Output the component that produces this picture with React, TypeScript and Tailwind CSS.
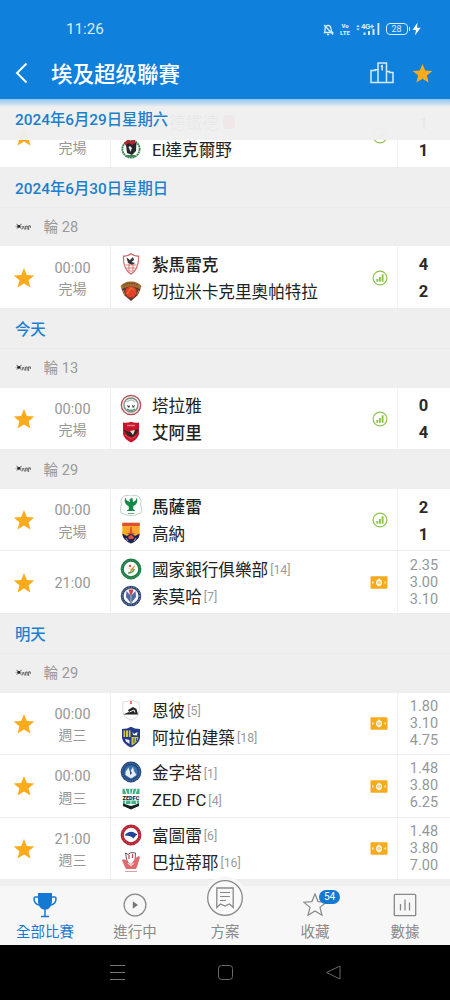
import React from 'react';

interface Team {
  name: string;
  crest: string;
  rank?: number;
  bold?: boolean;
  redCard?: boolean;
}

interface Match {
  time?: string;
  status?: string;
  home: Team;
  away: Team;
  scores?: string[];
  odds?: string[];
}

interface Round {
  label: string;
  matches: Match[];
}

interface Day {
  title: string;
  rounds: Round[];
}

const STAR = 'M12 1 L15.1 8.6 L23.2 9.200 L17 14.4 L19 22.300 L12 18 L5 22.300 L7 14.4 L.8 9.200 L8.9 8.6 Z';

const previousMatch: Match = {
  time: '\u00a0',
  status: '完場',
  home: { name: '德鐵德', crest: 'none', redCard: true },
  away: { name: 'El達克爾野', crest: 'dakhleya' },
  scores: ['1', '1'],
};

const days: Day[] = [
  {
    title: '2024年6月30日星期日',
    rounds: [
      {
        label: '輪 28',
        matches: [
          {
            time: '00:00',
            status: '完場',
            home: { name: '紮馬雷克', crest: 'zamalek', bold: true },
            away: { name: '切拉米卡克里奧帕特拉', crest: 'ceramica' },
            scores: ['4', '2'],
          },
        ],
      },
    ],
  },
  {
    title: '今天',
    rounds: [
      {
        label: '輪 13',
        matches: [
          {
            time: '00:00',
            status: '完場',
            home: { name: '塔拉雅', crest: 'talaea' },
            away: { name: '艾阿里', crest: 'ahly', bold: true },
            scores: ['0', '4'],
          },
        ],
      },
      {
        label: '輪 29',
        matches: [
          {
            time: '00:00',
            status: '完場',
            home: { name: '馬薩雷', crest: 'masry', bold: true },
            away: { name: '高納', crest: 'gouna' },
            scores: ['2', '1'],
          },
          {
            time: '21:00',
            home: { name: '國家銀行俱樂部', crest: 'bank', rank: 14 },
            away: { name: '索莫哈', crest: 'smouha', rank: 7 },
            odds: ['2.35', '3.00', '3.10'],
          },
        ],
      },
    ],
  },
  {
    title: '明天',
    rounds: [
      {
        label: '輪 29',
        matches: [
          {
            time: '00:00',
            status: '週三',
            home: { name: '恩彼', crest: 'enppi', rank: 5 },
            away: { name: '阿拉伯建築', crest: 'mokawloon', rank: 18 },
            odds: ['1.80', '3.10', '4.75'],
          },
          {
            time: '00:00',
            status: '週三',
            home: { name: '金字塔', crest: 'pyramids', rank: 1 },
            away: { name: 'ZED FC', crest: 'zed', rank: 4 },
            odds: ['1.48', '3.80', '6.25'],
          },
          {
            time: '21:00',
            status: '週三',
            home: { name: '富圖雷', crest: 'future', rank: 6 },
            away: { name: '巴拉蒂耶', crest: 'baladiyat', rank: 16 },
            odds: ['1.48', '3.80', '7.00'],
          },
        ],
      },
    ],
  },
];

const crests: Record<string, React.ReactNode> = {
  dakhleya: (
    <>
      <circle cx="11" cy="11" r="8.6" fill="#fff" stroke="#3f8a55" strokeWidth="1.9" strokeDasharray="2 .5" />
      <path d="M4 5 L8 1.500 L11 3 L15 1.500 L16 8 H6 Z" fill="#b3262b" />
      <path d="M6 7 L9 5 L12 7 L16.500 4 L16 13 L12 17 L7 15Z" fill="#24262a" />
      <path d="M8.500 9 L10 8 L12 10 L10.500 14Z" fill="#e6e6e6" />
      <path d="M7 18 H15" stroke="#3f8a55" strokeWidth="2" />
    </>
  ),
  zamalek: (
    <>
      <path d="M11 .8 C13 2.6 16 3.2 18.6 3 C18.8 10 17.5 17 11 21.2 C4.500 17 3.200 10 3.400 3 C6 3.200 9 2.600 11 .8Z" fill="#fff" stroke="#cf6c6c" strokeWidth="1.2" />
      <path d="M6.500 4.500 L10 7 L13 4 L14 7 L11.500 9 L15 10 L12 12 L8 10 Z" fill="#33343a" />
      <path d="M5.500 12 H16.500 M6.500 15 H15.500 M8.500 18 H13.500" stroke="#d98080" strokeWidth="1" />
      <path d="M9 11 V18 M13 11 V18" stroke="#cf5a5a" strokeWidth=".8" />
    </>
  ),
  ceramica: (
    <>
      <path d="M2.500 5 Q11 -1 19.500 5 L20.500 9 L18 15 L11 21 L4 15 L1.500 9Z" fill="#67382a" />
      <path d="M.5 6 Q5 1 11 1.500 Q17 1 21.500 6 L20 9 Q11 4 2 9Z" fill="#a06a32" />
      <path d="M4 5 Q11 1.500 18 5" fill="none" stroke="#5d3a26" strokeWidth="1" strokeDasharray="1.500 1" />
      <circle cx="11" cy="12" r="5.6" fill="#e3412a" />
      <path d="M7 14 L11 8 L14 10" fill="none" stroke="#f06a31" strokeWidth="1.300" />
      <path d="M3 10 L5 15 M19 10 L17 15" stroke="#b08a35" strokeWidth="1" />
    </>
  ),
  talaea: (
    <>
      <circle cx="11" cy="11" r="9.700" fill="#f6eaea" stroke="#b34b53" strokeWidth="1.300" />
      <circle cx="11" cy="11" r="7" fill="#fff" stroke="#7a8b82" strokeWidth="1.300" />
      <path d="M7 8 Q11 4 15 8" fill="none" stroke="#b9c4be" strokeWidth="1.200" />
      <path d="M7 11 L9 12 L10 11 L9.500 13.500 H8Z M12 11 L13.500 12 L15 11 L14 13.500 H12.500Z" fill="#30353a" />
      <path d="M7 15 Q11 18 15 15" fill="none" stroke="#4e8b63" strokeWidth="1.300" />
    </>
  ),
  ahly: (
    <>
      <path d="M3 1.500 Q7 2.500 11 .8 Q15 2.500 19 1.500 V13 Q18 18 11 21.500 Q4 18 3 13Z" fill="#c8152a" />
      <path d="M7 4.500 H15" stroke="#e8767c" strokeWidth="1.600" />
      <path d="M3.500 8.500 L9 11 L18.500 8 L17 12 L13 16 L8 15 Z" fill="#342426" />
      <path d="M10 10 L15 9 L13 14 Z" fill="#e9dfcf" />
      <path d="M5 14 L11 18 L16 15" fill="none" stroke="#e04a55" strokeWidth="1" />
    </>
  ),
  masry: (
    <>
      <path d="M4 1 Q11 -1 18 1 Q22.500 5 20.500 9 Q22.500 14 21 18 Q14 21 11 20.500 Q8 21 1 18 Q-.5 14 1.500 9 Q-.5 5 4 1Z" fill="#fff" stroke="#b5cfbd" strokeWidth=".9" />
      <path d="M5.500 2.500 Q3 8 8.500 11 L9 14 L6.500 16 H15.500 L13 14 L13.500 11 Q19 8 16.500 2.500 Q16.500 6 13 7 L12.500 3 L9.500 4 L10 7 Q6 6 5.500 2.500Z" fill="#138a46" />
      <path d="M8 18.500 H14" stroke="#6fae85" strokeWidth="1" />
    </>
  ),
  gouna: (
    <>
      <path d="M2.300 .8 H19.700 V13 Q18 18 11 21.500 Q4 18 2.300 13Z" fill="#f8a928" />
      <path d="M2.300 .8 H19.700 V4 H2.300Z" fill="#de4e34" />
      <path d="M2.300 11.500 L7 14 L11 11 L15 14 L19.700 11.500 Q19.500 18 11 21.500 Q2.500 18 2.300 11.500Z" fill="#1e2356" />
      <path d="M11 5 L12 11 H10Z M7.500 11.500 H14.500" fill="#de4e34" stroke="#de4e34" strokeWidth="1" />
      <path d="M8 15 L11 12.500 L14 15 L13 17 H9Z" fill="#e0503c" />
      <path d="M6 16 L8 19 M16 16 L14 19" stroke="#e9c9bd" strokeWidth=".8" />
    </>
  ),
  bank: (
    <>
      <circle cx="11" cy="11" r="8.800" fill="#fff" stroke="#1d7b44" strokeWidth="3.200" />
      <circle cx="11" cy="11" r="8.800" fill="none" stroke="#6db088" strokeWidth=".8" strokeDasharray="1 1.500" />
      <path d="M6 9 L11 11 L15.500 6.500 L13 12 L9 15 L11 11.500Z" fill="#d88b2b" />
      <path d="M8 15 Q13 15 14.500 11" fill="none" stroke="#4e9d5c" strokeWidth="1.300" />
      <circle cx="10" cy="8" r="1.200" fill="#d9533b" />
    </>
  ),
  smouha: (
    <>
      <circle cx="11" cy="11" r="8.900" fill="#f7f7fb" stroke="#2c4371" strokeWidth="2.800" />
      <circle cx="11" cy="11" r="8.900" fill="none" stroke="#9fb0cd" strokeWidth=".9" strokeDasharray="1 1.600" />
      <path d="M6.500 6 L10 10 V17 L6 12Z M15.500 6 L12 10 V17 L16 12Z" fill="#4a69a5" />
      <path d="M11 8 V18" stroke="#35466e" strokeWidth="1.200" />
      <path d="M8.500 4.500 H13.500 L12 9.500 H10Z" fill="#d33e4d" />
    </>
  ),
  enppi: (
    <>
      <path d="M3 3 Q7 3 11 .8 Q15 3 19 3 Q20 9 18.500 16 Q15 20 11 21 Q7 20 3.500 16 Q2 9 3 3Z" fill="#fff" stroke="#d8d0d0" strokeWidth=".8" />
      <path d="M3 15.500 L9 13 L8 11 L13 8 L16.500 10 L18 15.500 Z" fill="#202124" />
      <path d="M9.500 13 L14 11 L15 13.500" fill="none" stroke="#fff" strokeWidth="1" />
      <path d="M11 2 V5" stroke="#d92b36" strokeWidth="1.300" />
    </>
  ),
  mokawloon: (
    <>
      <path d="M2 3 L7 2.500 L11 .8 L15 2.500 L20 3 V12 Q19 18 11 21.500 Q3 18 2 12Z" fill="#263a8c" />
      <path d="M3.500 4.500 H10.500 V11 H3.500Z" fill="#d5c93f" />
      <path d="M5.500 4 V11 M8.500 4 V11" stroke="#4d5560" strokeWidth="1" />
      <path d="M11.500 11 H18.500 Q17.500 17 11.500 19.500Z" fill="#cdc93e" />
      <path d="M12.500 6 L14 8 L17.500 6 L17 9.500 L13 9Z" fill="#fff" />
      <path d="M5 13 L9.500 14 V18 L6 15.500Z" fill="#e9ecf7" />
      <path d="M14 12 V17 M16.500 12 V15" stroke="#3f4f6f" strokeWidth="1" />
    </>
  ),
  pyramids: (
    <>
      <circle cx="11" cy="11" r="10.400" fill="#244a7e" />
      <circle cx="11" cy="11" r="8.700" fill="none" stroke="#7590b5" strokeWidth=".9" strokeDasharray="1 1.300" />
      <circle cx="11" cy="11" r="6.800" fill="#3b73ad" />
      <path d="M5.500 14 V11 L8.500 6.500 L9.500 10 H10.500 L13 6 L14 10 L16.500 14 L11 17.500Z" fill="#e6edf5" />
      <path d="M10 9 V14 L12 12Z" fill="#244a7e" />
    </>
  ),
  zed: (
    <>
      <path d="M2.500 .8 H19.500 V6 H2.500Z" fill="#3fae83" />
      <path d="M5 1 L7 6 M9.500 1 L10 6 M13 1 L12 6 M17 1 L15 6" stroke="#e8f5ef" strokeWidth="1.200" />
      <text x="2.500" y="11.500" textLength="17" lengthAdjust="spacingAndGlyphs" fontSize="6.200" fontWeight="900" fontFamily="Roboto, sans-serif" fill="#162a2a">ZEDFC</text>
      <path d="M3 12.500 H19 V16 H3Z" fill="#3fae83" />
      <path d="M6 12.500 L5 16 M11 12.500 V16 M16 12.500 L17 16" stroke="#e8f5ef" strokeWidth="1.100" />
      <path d="M3 15.500 L11 18 L19 15.500 V18 L11 21.500 L3 18Z" fill="#14211f" />
    </>
  ),
  future: (
    <>
      <circle cx="11" cy="11" r="8.800" fill="#fff" stroke="#b5202f" strokeWidth="3.200" />
      <circle cx="11" cy="11" r="8.800" fill="none" stroke="#d4727c" strokeWidth=".9" strokeDasharray="1.200 1.800" />
      <path d="M4.500 11.500 Q8 7 13 8 L17.500 10.500 L15.500 12 L13.500 14.500 Q11 11.500 4.500 11.500Z" fill="#23449a" />
    </>
  ),
  baladiyat: (
    <>
      <path d="M5.500 2 L8 3.500 L11 1.500 L15.500 2 L15 10 L11 14 L7 10Z" fill="#fff" stroke="#5a4a4a" strokeWidth=".9" />
      <path d="M9 4 V8 M12.500 3 V7" stroke="#cf3f4a" strokeWidth="1.200" />
      <path d="M2 9 Q4 7 7 10 L11 13 L15 8 Q18 4 20 6 L18 13 L16 18 H6 L4 14Z" fill="#e06a70" />
      <path d="M8 12 L11 14.500 L14 12" fill="none" stroke="#fbe3e3" strokeWidth="1.100" />
      <path d="M5 20.500 H17" stroke="#d9a3a5" strokeWidth="1" />
    </>
  ),
};

function Crest({ name }: { name: string }) {
  if (!crests[name]) return <span className="w-[39px] shrink-0" />;
  return (
    <svg viewBox="0 0 22 22" className="w-[22px] h-[22px] shrink-0">
      {crests[name]}
    </svg>
  );
}

function Star({ className }: { className: string }) {
  return (
    <svg viewBox="0 0 24 24" className={className}>
      <path d={STAR} fill="#fcab1c" />
    </svg>
  );
}

function StatsIcon() {
  return (
    <svg viewBox="0 0 16 16" className="w-4 h-4">
      <circle cx="8" cy="8" r="6.900" fill="none" stroke="#8bc34a" strokeWidth="1.200" />
      <path d="M5.300 9 V11.800 M7.900 7 V11.800 M10.600 4.200 V11.800" stroke="#8bc34a" strokeWidth="1.900" />
    </svg>
  );
}

// Odds badge, a small pitch with the centre circle
function PitchIcon() {
  return (
    <svg viewBox="0 0 18 13" className="w-[18px] h-[13px]">
      <rect x=".5" y=".3" width="17" height="12.400" rx="1" fill="#f6ab1a" />
      <ellipse cx="9" cy="6.500" rx="2.300" ry="2.700" fill="none" stroke="#fff" strokeWidth="1.300" />
      <path d="M9 2.500 V10.500" stroke="#fff" strokeWidth="1" />
      <path d="M2.800 5.500 V7.500 M15.200 5.500 V7.500" stroke="#fff" strokeWidth="1.200" />
    </svg>
  );
}

function TeamLine({ team }: { team: Team }) {
  return (
    <div className="h-[27px] flex items-center whitespace-nowrap">
      <Crest name={team.crest} />
      <span className={`ml-[10px] pt-1 text-[16.6px] leading-6 text-[#222] ${team.bold ? 'font-medium' : ''}`}>
        {team.name}
      </span>
      {team.rank && <span className="ml-[2px] pt-[3px] text-[12.3px] text-[#9a9a9a]">[{team.rank}]</span>}
      {team.redCard && <span className="ml-1 w-3 h-3.5 rounded-sm bg-red-600" />}
    </div>
  );
}

function MatchRow({ match }: { match: Match }) {
  return (
    <div className="h-[62.5px] shrink-0 flex bg-white border-b border-[#ededed]">
      <div className="w-[111px] flex items-center border-r border-[#efefef]">
        <Star className="w-[22px] h-[22px] ml-[13px] mt-px shrink-0" />
        <div className="ml-[10px] w-[55px] pt-1 text-center text-[14.5px] leading-[20.5px] text-[#979797]">
          <div>{match.time}</div>
          {match.status && <div className="text-[14px]">{match.status}</div>}
        </div>
      </div>
      <div className="flex-1 flex flex-col justify-center pl-[9px]">
        <TeamLine team={match.home} />
        <TeamLine team={match.away} />
      </div>
      <div className="w-[36px] pt-px flex items-center justify-center">
        {match.odds ? <PitchIcon /> : <div className="ml-[2px]"><StatsIcon /></div>}
      </div>
      <div className="w-[53px] flex flex-col items-center justify-center border-l border-[#f2f2f2]">
        {match.scores?.map((score, i) => (
          <div key={i} className="h-[27px] pt-px pr-px leading-[27px] text-[16.5px] font-bold text-[#2a2a2a]">{score}</div>
        ))}
        {match.odds?.map((odd, i) => (
          <div key={i} className="text-[14.5px] leading-[17px] text-[#979797]">{odd}</div>
        ))}
      </div>
    </div>
  );
}

function RoundHeader({ label }: { label: string }) {
  return (
    <div className="h-[38.8px] shrink-0 flex items-center pl-[14px] bg-[#efefef]">
      <svg viewBox="0 0 18 10" className="w-[18px] h-[10px]">
        <path d="M1 4.500 H17" stroke="#bdbdbd" strokeWidth=".8" />
        <path d="M2.500 2 L5 4.500 L7.500 2 M2.500 6.500 L5 4.500 L7.500 6.500" fill="none" stroke="#8a8a8a" strokeWidth="1.100" />
        <circle cx="4.800" cy="4.300" r="1.400" fill="#222" />
        <path d="M8 7.500 L9.300 4 L10.600 7.500 M11.600 7.500 V4 H13.200 V7.500 M14.600 8 V3.800 H16.300 V6" fill="none" stroke="#6f6f6f" strokeWidth="1" />
      </svg>
      <span className="ml-[11.5px] pt-[2px] text-[14.6px] text-[#9a9a9a]">{label}</span>
    </div>
  );
}

function DayHeader({ title }: { title: string }) {
  return (
    <div className="h-10 shrink-0 flex items-center pl-[15px] pt-[5px] bg-[#efefef] border-b border-[#eaeaea] text-[15.35px] font-medium text-[#1b7fcd]">
      {title}
    </div>
  );
}

function StatusBar() {
  return (
    <div className="h-[58px] flex items-center justify-between pl-[66px] pr-[29px] text-[#d8ecff]">
      <span className="text-[15.2px]">11:26</span>
      <div className="flex items-center">
        <svg viewBox="0 0 12 13" className="w-3 h-[13px]" fill="none" stroke="currentColor" strokeWidth="1.300">
          <path d="M2.500 9.500 Q3.200 7.500 3 5.500 Q3.300 2.500 6 2.300 Q8.700 2.500 9 5.500 Q9 8 10.500 9.500Z M5 11.500 H7.200 M2 2 L11 11.500" />
        </svg>
        <div className="ml-[6px] w-[11px] flex flex-col items-center text-[6px] leading-[7px] font-black">
          <span>Vo</span>
          <span>LTE</span>
        </div>
        <svg viewBox="0 0 25 14" className="ml-[5px] w-[25px] h-[14px]" fill="currentColor">
          <path d="M2 3 L3.800 5 H.2Z M2 8.500 L3.800 6.500 H.2Z" />
          <text x="5" y="6.800" fontSize="7.800" fontWeight="700" textLength="13" fontFamily="Roboto, sans-serif">4G+</text>
          <path d="M7.500 10.500 H9.500 V13 H7.500Z M12 9 H14 V13 H12Z M16.500 7 H18.500 V13 H16.500Z M21.500 1 H23.300 V13 H21.500Z" />
        </svg>
        <div className="ml-[5px] w-[22px] h-[12px] rounded-[4px] border border-current text-[9px] leading-[10px] text-center">28</div>
        <div className="ml-px w-[1.5px] h-1 bg-current" />
        <svg viewBox="0 0 9 14" className="ml-[2px] w-[9px] h-[14px]" fill="#fff">
          <path d="M5.500 .5 L.5 8 H4 L3 13.500 L8.600 5.800 H5Z" />
        </svg>
      </div>
    </div>
  );
}

function TitleBar() {
  return (
    <div className="h-[41px] flex items-center pl-[15px] pr-[17px] pb-[11px]">
      <svg viewBox="0 0 13 22" className="w-[13px] h-[22px]" fill="none" stroke="#fff" strokeWidth="1.900">
        <path d="M11.500 1.500 L2 11 L11.500 20.500" />
      </svg>
      <h1 className="ml-[23px] pt-[3px] flex-1 text-[21.5px] leading-[30px] font-medium text-white">埃及超级聯賽</h1>
      <svg viewBox="0 0 24 22" className="w-6 h-[22px]" fill="none" stroke="#d5ebff" strokeWidth="1.500">
        <path d="M8 20.500 V1 H16.500 V20.500 M8 7.800 H5 V8.500 H1 V20.500 H23 V10.500 H19.500 V9.500 H16.500" />
        <path d="M10.800 4.500 L12.200 3.800 V8.500" />
      </svg>
      <Star className="ml-[18px] w-[21px] h-[21px]" />
    </div>
  );
}

const tabs = [
  {
    label: '全部比賽',
    icon: (
      <svg viewBox="0 0 24 26" className="w-6 h-[26px]" fill="none" stroke="#1479d2" strokeWidth="1.500">
        <path d="M5 1 H19 V10 Q18 16 14 17.500 H10 Q6 16 5 10Z" fill="#1479d2" stroke="none" />
        <path d="M5 5 H2.500 Q1 5 1 7 Q1 11.500 6 13 M19 5 H21.500 Q23 5 23 7 Q23 11.500 18 13 M12 17 V24.500 M8 24.500 H16" />
      </svg>
    ),
  },
  {
    label: '進行中',
    icon: (
      <svg viewBox="0 0 24 24" className="w-6 h-6">
        <circle cx="12" cy="12" r="10.900" fill="none" stroke="#888" strokeWidth="1.200" />
        <path d="M9.800 8.300 L15 12 L9.800 15.700Z" fill="#777" />
      </svg>
    ),
  },
  {
    label: '方案',
    icon: (
      <svg viewBox="0 0 44 44" className="absolute left-1/2 -translate-x-1/2 -top-[10px] w-11 h-11">
        <circle cx="22" cy="22" r="21.500" fill="#f7f7f7" />
        <circle cx="22" cy="22" r="17.300" fill="#fafafa" stroke="#888" strokeWidth="1.300" />
        <path d="M13.800 12 H30.200 V31.500 L26.500 28 L22 30 L17.500 28 L13.800 31.500Z" fill="none" stroke="#888" strokeWidth="1.300" />
        <path d="M17 16.500 H27 M17 20.500 H27 M17 24.500 H23" stroke="#888" strokeWidth="1.200" />
      </svg>
    ),
  },
  {
    label: '收藏',
    badge: 54,
    icon: (
      <svg viewBox="0 0 24 24" className="w-6 h-6" fill="none" stroke="#888" strokeWidth="1.200">
        <path d={STAR} />
      </svg>
    ),
  },
  {
    label: '數據',
    icon: (
      <svg viewBox="0 0 24 24" className="w-6 h-6" fill="none" stroke="#888" strokeWidth="1.300">
        <rect x="1.300" y="1.300" width="21.400" height="21.400" rx="1" />
        <path d="M7.500 11 V17.500 M12 6.500 V17.500 M16.500 9.500 V17.500" />
      </svg>
    ),
  },
];

function TabBar() {
  return (
    <nav className="h-[59px] flex bg-[#f7f7f7]">
      {tabs.map((tab, i) => (
        <div key={tab.label} className="relative flex-1 flex flex-col items-center pt-[6px]">
          <div className="h-[26px] flex items-center justify-center">{tab.icon}</div>
          {tab.badge && (
            <span className="absolute left-[49px] top-[4px] w-[21px] h-[14px] rounded-full bg-[#1479cf] text-white text-[10px] leading-[14px] text-center">
              {tab.badge}
            </span>
          )}
          <span className={`mt-[3.5px] text-[14.5px] leading-[22px] ${i === 0 ? 'text-[#1479d2]' : 'text-[#8a8a8a]'}`}>
            {tab.label}
          </span>
        </div>
      ))}
    </nav>
  );
}

function SystemBar() {
  return (
    <div className="h-[55px] flex items-center justify-center gap-[91px] bg-black">
      <svg viewBox="0 0 17 17" className="w-[17px] h-[17px]" stroke="#747474" strokeWidth="1">
        <path d="M1 1.500 H16 M1 8.500 H16 M1 15.500 H16" />
      </svg>
      <svg viewBox="0 0 17 17" className="w-[17px] h-[17px]" fill="none" stroke="#686868">
        <rect x="1.500" y="1.500" width="14" height="14" rx="3" />
      </svg>
      <svg viewBox="0 0 17 17" className="w-[17px] h-[17px]" fill="none" stroke="#686868" strokeLinejoin="round">
        <path d="M15 2 V15 L1.500 8.500Z" />
      </svg>
    </div>
  );
}

function App() {
  return (
    <div className="w-[450px] h-[1000px] flex flex-col overflow-hidden bg-[#efefef] font-[Roboto,'Noto_Sans_CJK_TC',sans-serif]">
      {/* App header */}
      <header className="h-[99px] shrink-0 bg-[#0f80dc]">
        <StatusBar />
        <TitleBar />
      </header>

      {/* Match list, scrolled under the sticky day header */}
      <main className="relative h-[787px] shrink-0 flex flex-col pt-[6px] overflow-hidden">
        <MatchRow match={previousMatch} />
        {days.map((day) => (
          <React.Fragment key={day.title}>
            <DayHeader title={day.title} />
            {day.rounds.map((round) => (
              <React.Fragment key={round.label}>
                <RoundHeader label={round.label} />
                {round.matches.map((match) => (
                  <MatchRow key={match.home.name} match={match} />
                ))}
              </React.Fragment>
            ))}
          </React.Fragment>
        ))}
        <div className="absolute left-0 top-0 w-full h-[41px] flex items-center pl-[15px] pt-[2px] bg-[#efefef]/97 text-[15.35px] font-medium text-[#1b7fcd]">
          2024年6月29日星期六
        </div>
        <div className="absolute inset-x-0 top-0 h-2 bg-linear-to-b from-[#8fc3ee] to-transparent" />
      </main>

      <TabBar />
      <SystemBar />
    </div>
  );
}

export default App;
